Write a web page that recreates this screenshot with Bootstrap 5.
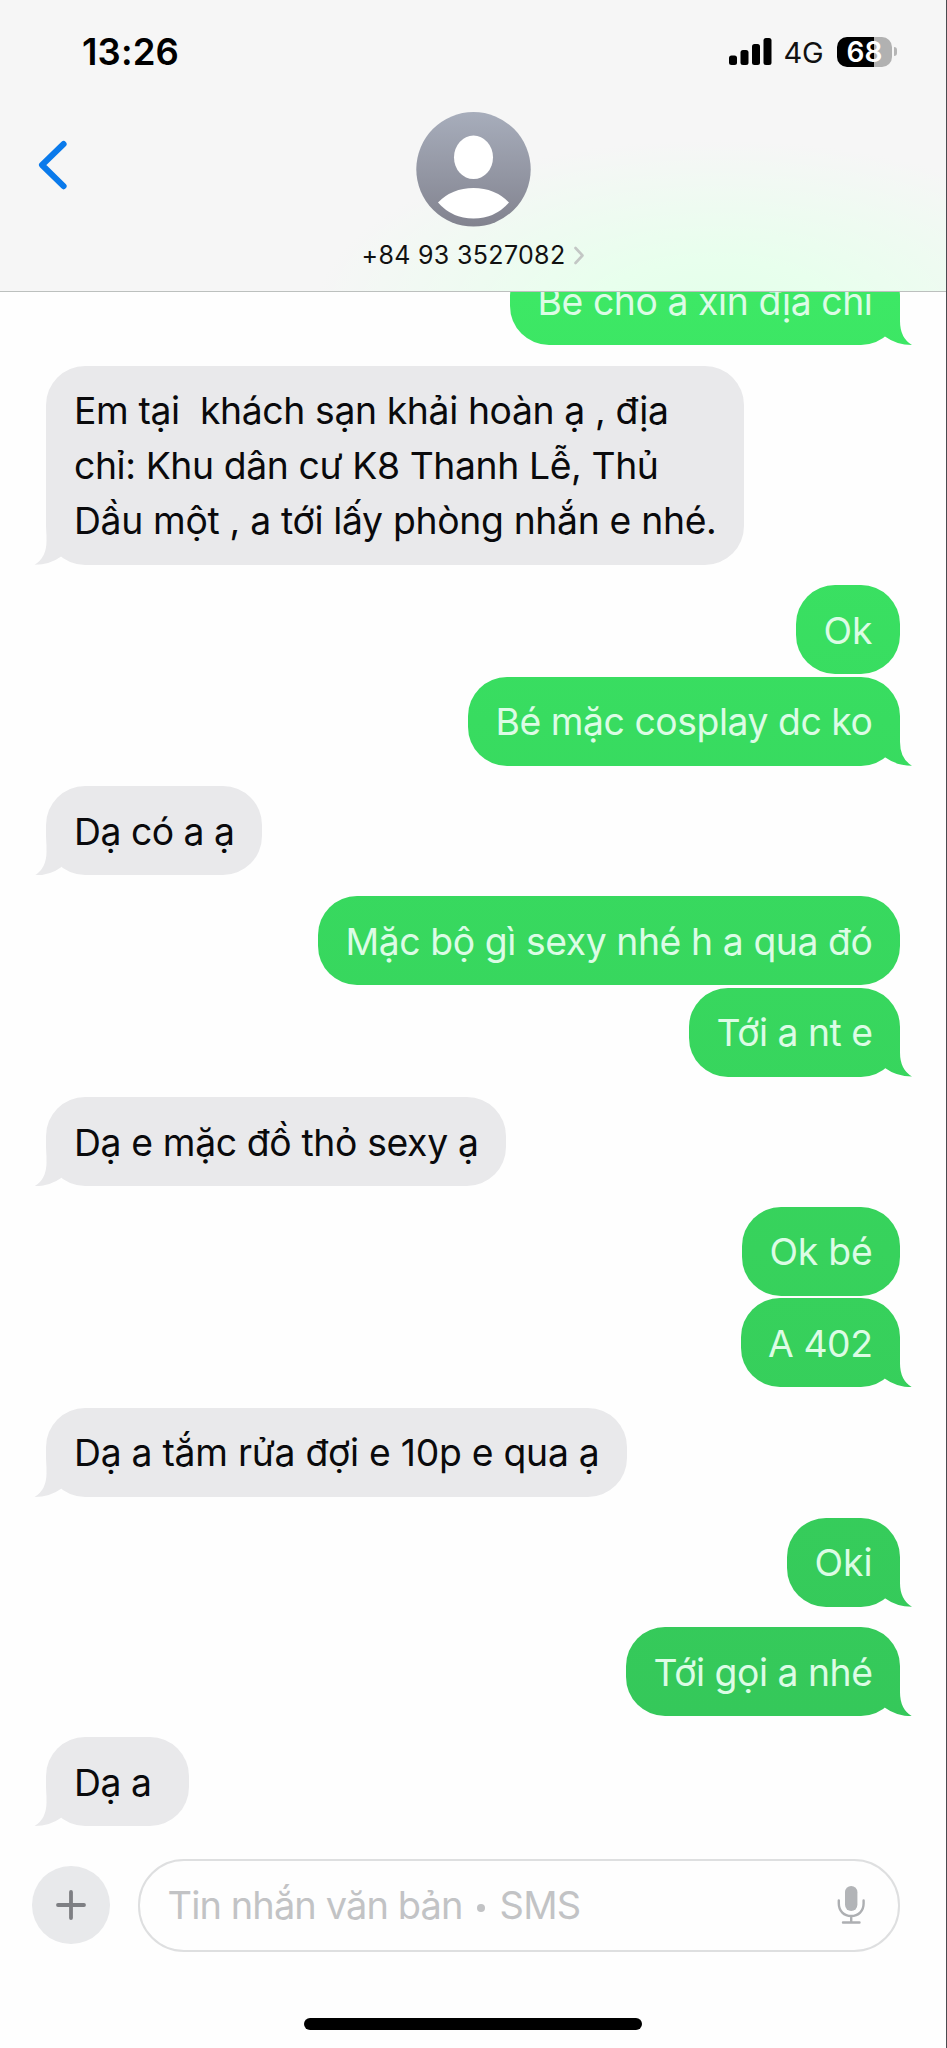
<!DOCTYPE html>
<html lang="vi">
<head>
<meta charset="utf-8">
<meta name="viewport" content="width=device-width, initial-scale=1">
<title>Tin nhắn</title>
<link href="https://cdn.jsdelivr.net/npm/bootstrap@5.3.0/dist/css/bootstrap.min.css" rel="stylesheet">
<style>
  html, body { height: 2048px; overflow: hidden; }
  body { font-family: Inter, "Noto Sans", sans-serif; color: #0a0a0c; background: #fefefe; }
  svg { display: block; }
  .phone { width: 947px; height: 2048px; border-right: 1px solid #4b4b50; overflow: hidden; }
  .fit { white-space: pre; }

  .topbar { height: 292px; border-bottom: 1px solid #bcc0be; z-index: 2;
    background: radial-gradient(ellipse 400px 170px at 715px 310px, #e4ffea 0%, #e8ffed 30%, rgba(246,246,246,0) 100%), #f6f6f6; }
  .statusbar { height: 102px; padding: 0 49px 0 82px; }
  .clock { font-size: 36.5px; font-weight: 600; line-height: 44px; margin-top: 30px; color: #000; }
  .bars { margin-top: 38px; }
  .network { font-size: 29px; line-height: 36px; margin: 35px 0 0 12px; color: #111; }
  .battery { width: 55px; height: 30px; border-radius: 10px; margin: 36.5px 0 0 13.5px; color: #fff;
    background: linear-gradient(90deg, #000 68%, #b1b1b1 68%); font-size: 28px; font-weight: 600; line-height: 30px; }
  .battery-tip { width: 3px; height: 9px; border-radius: 0 4px 4px 0; background: #b5b5b5; margin: 47px 0 0 2px; }
  .contact-row { height: 189px; }
  .back { margin: 37px 0 0 36px; }
  .contact { margin-left: 293px; width: 228px; }
  .avatar { margin: 10px 0 0 -3px; }
  .number { font-size: 25px; line-height: 30px; color: #111; margin: 13px 4px 0 0; }
  .number svg { margin-left: 7px; }

  .thread { height: 1556px; padding: 0 46px; margin-top: -36px; }
  .bubble { position: relative; padding: 17.5px 27.5px 16.5px; border-radius: 39px; font-size: 37.3px; line-height: 55px;
    margin-bottom: 20.7px; }
  .bubble.joined { margin-bottom: 2.4px; }
  .received { align-self: flex-start; background: #e9e9eb; padding-left: 28px; }
  .sent { align-self: flex-end; color: #dcfce5; }
  .sent, .sent.tail::after { background: linear-gradient(#3de865 291px, #38dc60 720px, #37d25c 1250px, #35c85a 1716px) fixed; }
  .tail::after { content: ""; position: absolute; bottom: 0; right: -13.5px; width: 54px; height: 45px;
    clip-path: path("M25.5 36.5Q37 45 52.5 45Q40.5 38 40.5 21V0H25.5Z"); }
  .received.tail::after { right: auto; left: -13.5px; transform: scaleX(-1); background: #e9e9eb; }

  .composer { height: 93px; margin-top: 46.5px; padding: 0 46px 0 32px; gap: 28px; }
  .plus { width: 77.5px; height: 77.5px; border-radius: 50%; background: #e8e9eb; }
  .field { border: 2px solid #dedfe0; border-radius: 46px; height: 93px; padding: 0 33px 0 28px; font-size: 38px; color: #c2c3c5; }
  .dot { width: 8px; height: 8px; border-radius: 50%; background: #c2c3c5; margin: 6px 15px 0 14px; }
  .home { width: 338px; height: 11.5px; border-radius: 6px; background: #000; margin: 66.5px 0 0 304px; }
</style>
</head>
<body>
<div class="phone d-flex flex-column">
  <header class="topbar position-relative flex-shrink-0">
    <div class="statusbar d-flex align-items-start">
      <div class="clock"><span class="fit" data-w="97">13:26</span></div>
      <svg class="bars ms-auto" width="43" height="28" fill="#000">
        <rect x="0" y="17.5" width="8" height="9.5" rx="2.5"/><rect x="11.5" y="12" width="8" height="15" rx="2.5"/>
        <rect x="23" y="6" width="8" height="21" rx="2.5"/><rect x="34.5" y="0" width="8" height="27" rx="2.5"/>
      </svg>
      <div class="network"><span class="fit" data-w="40">4G</span></div>
      <div class="battery text-center"><span class="fit" data-w="36">68</span></div>
      <div class="battery-tip"></div>
    </div>
    <div class="contact-row d-flex align-items-start">
      <svg class="back" width="32" height="52" fill="none" stroke="#0a7aeb" stroke-width="6" stroke-linecap="round" stroke-linejoin="round">
        <path d="M27.6 5L6 26L27.6 47.2"/>
      </svg>
      <div class="contact d-flex flex-column align-items-center">
        <svg class="avatar" width="115" height="115" viewBox="0 0 115 115">
          <defs><linearGradient id="shade" x2="0" y2="1"><stop stop-color="#a7adbb"/><stop offset="1" stop-color="#82838f"/></linearGradient></defs>
          <circle cx="57.5" cy="57.3" r="57.2" fill="url(#shade)"/>
          <ellipse cx="57.5" cy="45.3" rx="19.5" ry="21.8" fill="#fff"/>
          <path d="M22 90.5Q36 76 57.5 76T93 90.5Q79 106.5 57.5 106.5T22 90.5Z" fill="#fff"/>
        </svg>
        <div class="number d-flex align-items-center">
          <span class="fit" data-w="204">+84 93 3527082</span>
          <svg width="12" height="20" fill="none" stroke="#c3c7c5" stroke-width="2.6" stroke-linecap="round" stroke-linejoin="round"><path d="M2.5 3L9.5 10.5L2.5 18"/></svg>
        </div>
      </div>
    </div>
  </header>

  <main class="thread d-flex flex-column flex-shrink-0">
    <div class="bubble sent tail"><span class="fit" data-w="335">Bé cho a xin địa chỉ</span></div>
    <div class="bubble received tail"><span class="fit d-block" data-w="594.5">Em tại  khách sạn khải hoàn ạ , địa</span><span class="fit d-block" data-w="584.5">chỉ: Khu dân cư K8 Thanh Lễ, Thủ</span><span class="fit d-block" data-w="642.5">Dầu một , a tới lấy phòng nhắn e nhé.</span></div>
    <div class="bubble sent joined"><span class="fit" data-w="49">Ok</span></div>
    <div class="bubble sent tail"><span class="fit" data-w="377">Bé mặc cosplay dc ko</span></div>
    <div class="bubble received tail"><span class="fit" data-w="160.5">Dạ có a ạ</span></div>
    <div class="bubble sent joined"><span class="fit" data-w="527">Mặc bộ gì sexy nhé h a qua đó</span></div>
    <div class="bubble sent tail"><span class="fit" data-w="156">Tới a nt e</span></div>
    <div class="bubble received tail"><span class="fit" data-w="404.5">Dạ e mặc đồ thỏ sexy ạ</span></div>
    <div class="bubble sent joined"><span class="fit" data-w="103">Ok bé</span></div>
    <div class="bubble sent tail"><span class="fit" data-w="104.500">A 402</span></div>
    <div class="bubble received tail"><span class="fit" data-w="525.5">Dạ a tắm rửa đợi e 10p e qua ạ</span></div>
    <div class="bubble sent tail"><span class="fit" data-w="58">Oki</span></div>
    <div class="bubble sent tail"><span class="fit" data-w="219">Tới gọi a nhé</span></div>
    <div class="bubble received tail"><span class="fit" data-w="87.5">Dạ a </span></div>
  </main>

  <footer class="flex-shrink-0">
    <div class="composer d-flex align-items-center">
      <div class="plus d-flex align-items-center justify-content-center flex-shrink-0">
        <svg width="32" height="32" stroke="#7e7f83" stroke-width="3.8" stroke-linecap="round"><path d="M16 3V29M3 16H29"/></svg>
      </div>
      <div class="field d-flex align-items-center flex-grow-1">
        <span class="fit" data-w="295">Tin nhắn văn bản</span><span class="dot"></span><span class="fit" data-w="81">SMS</span>
        <svg class="ms-auto" width="28" height="40" fill="none" stroke="#adafb2" stroke-width="2.4" stroke-linecap="round">
          <rect x="8" y="1" width="12.4" height="25" rx="6.2" fill="#b2b4b7" stroke="none"/>
          <path d="M1.8 15.5V18.5C1.8 26 7 31 14.2 31S26.6 26 26.6 18.5V15.5M14.2 31V37.5M6 37.5H22.5"/>
        </svg>
      </div>
    </div>
    <div class="home"></div>
  </footer>
</div>
<script src="https://cdn.jsdelivr.net/npm/bootstrap@5.3.0/dist/js/bootstrap.bundle.min.js"></script>
<script>
  // Track each line of text so that it fills its measured width.
  document.querySelectorAll('.fit').forEach(function (el) {
    el.style.letterSpacing = '0px';
    var range = document.createRange();
    range.selectNodeContents(el);
    var natural = range.getBoundingClientRect().width;
    el.style.letterSpacing = (el.dataset.w - natural) / el.textContent.length + 'px';
  });
</script>
</body>
</html>
